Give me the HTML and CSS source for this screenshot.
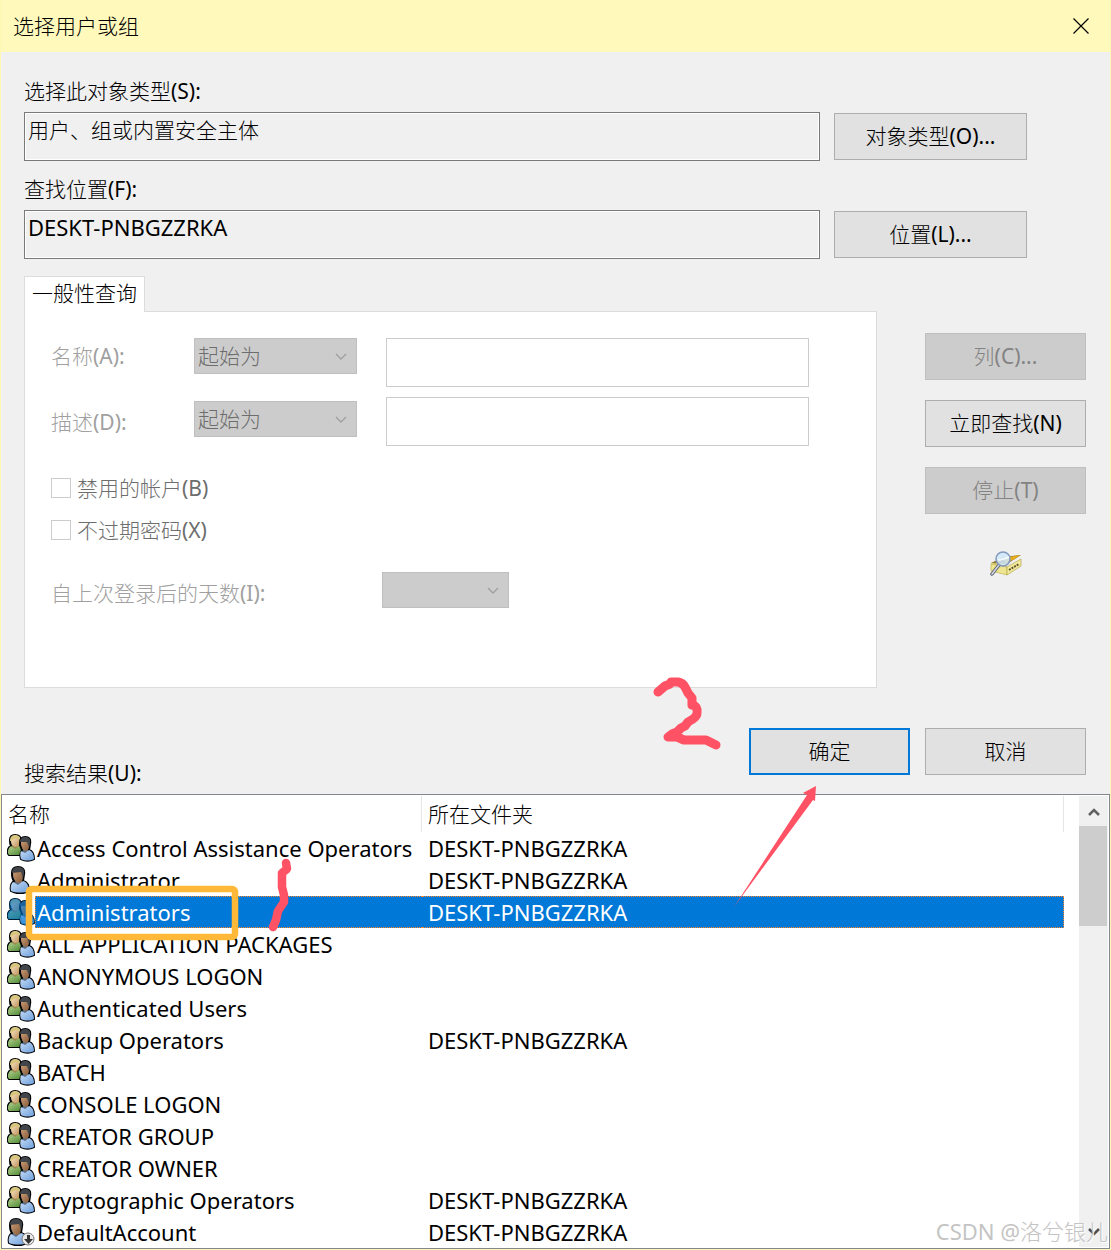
FILE: index.html
```html
<!DOCTYPE html>
<html lang="zh-CN">
<head>
<meta charset="utf-8">
<title>选择用户或组</title>
<link rel="stylesheet" href="styles.css">
</head>
<body>
<svg class="defs" aria-hidden="true">
  <defs>
    <linearGradient id="skin" x1="0" x2="1" y1="0" y2="1"><stop offset="0" stop-color="#c79a70"/><stop offset="1" stop-color="#855a3c"/></linearGradient>
    <linearGradient id="fair" x1="0" x2="1" y1="0" y2="1"><stop offset="0" stop-color="#fdeccb"/><stop offset="1" stop-color="#b98a55"/></linearGradient>
    <linearGradient id="blue" x1="0" x2="1" y1="0" y2="1"><stop offset="0" stop-color="#c6dcf6"/><stop offset="1" stop-color="#6d9fdc"/></linearGradient>
    <linearGradient id="green" x1="0" x2="1" y1="0" y2="1"><stop offset="0" stop-color="#b4d58d"/><stop offset="1" stop-color="#4e8434"/></linearGradient>
    <symbol id="users" viewBox="0 0 28 28">
      <path d="M3 6C3 2 5 1 8 1c4 0 6 2 6 6l-1 4 2 3v7H2c-2-2-2-7 2-9-1-2-1-4-1-6z" fill="#9b8b50" stroke="#000" stroke-width="2"/>
      <path d="M4 12l4 3 4-3 3 3v6H2c-2-2-1-7 2-9z" fill="url(#green)"/>
      <path d="M4 6c0-3 2-4 5-4 3 0 4 2 4 5 0 4-2 6-4 6-3 0-5-3-5-7z" fill="url(#fair)"/>
      <path d="M3 7c0-4 2-6 5-6s6 2 5 4c-4-1-7-1-8 2z" fill="#d8c680"/>
      <path d="M13 9c0-4 2-6 5-6 4 0 6 2 5 7l-1 6c3 1 5 4 5 9-4 2-9 2-13 0-1-3-1-6 1-9-1-2-2-4-2-7z" fill="#5b6e88" stroke="#000" stroke-width="2"/>
      <path d="M14 17l4 2 4-3c3 1 5 4 5 9-4 2-9 2-13 0-1-3-1-6 0-8z" fill="url(#blue)"/>
      <path d="M14 8c2-1 5-1 8 0 1 5-1 9-3 9-3 0-5-4-5-9z" fill="url(#skin)"/>
      <path d="M13 8c0-3 2-5 5-5 4 0 6 2 5 7l-1 3-2-5z" fill="#414449"/>
    </symbol>
    <symbol id="users-selected" viewBox="0 0 28 28">
      <use href="#users" width="28" height="28"/>
      <g fill="#0078d7" fill-opacity=".6" stroke="#0078d7" stroke-opacity=".25" stroke-width="2">
        <path d="M3 6C3 2 5 1 8 1c4 0 6 2 6 6 1-3 2-4 4-4 4 0 6 2 5 7l-1 6c3 1 5 4 5 9-4 2-9 2-13 0v-4H2c-2-2-2-7 2-9-1-2-1-4-1-6z"/>
      </g>
    </symbol>
    <symbol id="user" viewBox="0 0 28 28">
      <path d="M5 7c0-5 3-6 6-6 4 0 7 2 6 7l-1 7c4 1 6 5 6 10-5 3-13 3-18 0-1-5 0-8 3-10-2-2-2-5-2-8z" fill="#5b6e88" stroke="#000" stroke-width="2"/>
      <path d="M6 16l5 3 5-4c4 1 6 5 6 10-5 2-13 2-18 0-1-4 0-7 2-9z" fill="url(#blue)"/>
      <path d="M6 6c3-1 6-1 9 0 2 6 0 11-3 11-4 0-6-5-6-11z" fill="url(#skin)"/>
      <path d="M5 7c0-5 3-6 6-6 4 0 7 2 6 7l-1 4-2-6z" fill="#414449"/>
    </symbol>
    <symbol id="user-off" viewBox="0 0 28 28">
      <use href="#user" x="-2" width="28" height="28"/>
      <circle cx="21" cy="21" r="6" fill="#e8e8e8" stroke="#777"/>
      <path d="M20 17h3v4h3l-4.500 5-4.500-5h3z" fill="#333"/>
    </symbol>
    <symbol id="chevron" viewBox="0 0 12 7"><path d="M1 1l5 5 5-5" fill="none" stroke="currentColor" stroke-width="1.400"/></symbol>
  </defs>
</svg>

<main class="dialog">
  <header class="titlebar">
    <h1>选择用户或组</h1>
    <button class="close" type="button" aria-label="关闭">
      <svg width="16" height="16" viewBox="0 0 16 16"><path d="M.5.5l15 15M15.500.5l-15 15" stroke="#000" stroke-width="1.200"/></svg>
    </button>
  </header>

  <form class="content">
    <div class="field">
      <label for="types">选择此对象类型(S):</label>
      <div class="field-row">
        <input id="types" class="readout" readonly value="用户、组或内置安全主体">
        <button class="btn wide" type="button">对象类型(O)...</button>
      </div>
    </div>
    <div class="field">
      <label for="place">查找位置(F):</label>
      <div class="field-row">
        <input id="place" class="readout latin" readonly value="DESKT-PNBGZZRKA">
        <button class="btn wide" type="button">位置(L)...</button>
      </div>
    </div>

    <div class="query">
      <section class="tabs">
        <button class="tab" type="button">一般性查询</button>
        <div class="panel">
          <div class="criteria first">
            <label for="name">名称(A):</label>
            <span class="combo">
              <select disabled aria-label="名称条件"><option>起始为</option></select>
              <svg><use href="#chevron"/></svg>
            </span>
            <input id="name" disabled>
          </div>
          <div class="criteria second">
            <label for="desc">描述(D):</label>
            <span class="combo">
              <select disabled aria-label="描述条件"><option>起始为</option></select>
              <svg><use href="#chevron"/></svg>
            </span>
            <input id="desc" disabled>
          </div>
          <div class="checks">
            <label><input type="checkbox" disabled>禁用的帐户(B)</label>
            <label><input type="checkbox" disabled>不过期密码(X)</label>
          </div>
          <div class="days">
            <label for="days">自上次登录后的天数(I):</label>
            <span class="combo small">
              <select id="days" disabled><option></option></select>
              <svg><use href="#chevron"/></svg>
            </span>
          </div>
        </div>
      </section>
      <div class="actions">
        <button class="btn" type="button" disabled>列(C)...</button>
        <button class="btn" type="button">立即查找(N)</button>
        <button class="btn" type="button" disabled>停止(T)</button>
        <svg class="search-icon" viewBox="0 0 32 26">
          <path d="M1 12l13-6 17-2-14 8v10L1 19z" fill="#e6dc83"/>
          <path d="M1 12l13-6 17-2-14 9z" fill="#8e7430"/>
          <path d="M14 7l16-3-5 4-10 4z" fill="#e8ad1c"/>
          <path d="M1 13l16 3v8L1 20z" fill="#efe58e" stroke="#b8ab50" stroke-width=".6"/>
          <path d="M17 16l14-8v7l-14 9z" fill="#f3eb9c" stroke="#a89838" stroke-width=".6"/>
          <path d="M19 19l10-6" stroke="#5c5228" stroke-width="2" stroke-dasharray="2 1"/>
          <path d="M9 14l-7 9" stroke="#5d6470" stroke-width="3.500" stroke-linecap="round"/>
          <path d="M9 14l-7 9" stroke="#d5dae2" stroke-width="1.500" stroke-linecap="round"/>
          <circle cx="13" cy="8" r="7" fill="#cfe9fb" fill-opacity=".85" stroke="#8498bc" stroke-width="1.500"/>
          <path d="M8 9c4 0 7-2 11-3" stroke="#f2f8fd" stroke-width="2" fill="none"/>
        </svg>
      </div>
    </div>

    <div class="confirm">
      <h2 id="results">搜索结果(U):</h2>
      <button class="btn default" type="submit">确定</button>
      <button class="btn" type="button">取消</button>
    </div>
  </form>

  <div class="list">
    <table aria-labelledby="results">
      <thead><tr><th class="name">名称</th><th>所在文件夹</th></tr></thead>
      <tbody>
        <tr><td><div><svg><use href="#users"/></svg><span>Access Control Assistance Operators</span></div></td><td>DESKT-PNBGZZRKA</td></tr>
        <tr><td><div><svg><use href="#user"/></svg><span>Administrator</span></div></td><td>DESKT-PNBGZZRKA</td></tr>
        <tr class="selected"><td><div><svg><use href="#users-selected"/></svg><span>Administrators</span></div></td><td>DESKT-PNBGZZRKA</td></tr>
        <tr><td><div><svg><use href="#users"/></svg><span>ALL APPLICATION PACKAGES</span></div></td><td></td></tr>
        <tr><td><div><svg><use href="#users"/></svg><span>ANONYMOUS LOGON</span></div></td><td></td></tr>
        <tr><td><div><svg><use href="#users"/></svg><span>Authenticated Users</span></div></td><td></td></tr>
        <tr><td><div><svg><use href="#users"/></svg><span>Backup Operators</span></div></td><td>DESKT-PNBGZZRKA</td></tr>
        <tr><td><div><svg><use href="#users"/></svg><span>BATCH</span></div></td><td></td></tr>
        <tr><td><div><svg><use href="#users"/></svg><span>CONSOLE LOGON</span></div></td><td></td></tr>
        <tr><td><div><svg><use href="#users"/></svg><span>CREATOR GROUP</span></div></td><td></td></tr>
        <tr><td><div><svg><use href="#users"/></svg><span>CREATOR OWNER</span></div></td><td></td></tr>
        <tr><td><div><svg><use href="#users"/></svg><span>Cryptographic Operators</span></div></td><td>DESKT-PNBGZZRKA</td></tr>
        <tr><td><div><svg><use href="#user-off"/></svg><span>DefaultAccount</span></div></td><td>DESKT-PNBGZZRKA</td></tr>
      </tbody>
    </table>
    <div class="scrollbar">
      <button type="button" aria-label="向上滚动"><svg viewBox="0 0 12 9"><path d="M1 8l5-5 5 5" fill="none" stroke="#606060" stroke-width="2.500"/></svg></button>
      <div class="thumb"></div>
      <button type="button" aria-label="向下滚动"><svg viewBox="0 0 12 9"><path d="M1 1l5 5 5-5" fill="none" stroke="#505050" stroke-width="2.500"/></svg></button>
    </div>
  </div>

  <svg class="marks" width="830" height="950" viewBox="0 0 830 950" aria-hidden="true">
    <rect x="29" y="889" width="206" height="48" rx="3" fill="none" stroke="#ffb837" stroke-width="6.500"/>
    <g fill="none" stroke="#ff5264" stroke-linecap="round" stroke-linejoin="round">
      <path d="M286 863l1 6-5 4v14l2 8v7l-6 9-2 9-3 7" stroke-width="8.500"/>
      <path d="M658 692l7-6 5-2 1-2h7q5 1 7 5l3 6 4 5v7q6 1 5 8 0 3-4 6l-5 3-3 4-4 2-4 4-5 2-4 3h9l7 3h22l6 3 4 2" stroke-width="9"/>
    </g>
    <path d="M816 786l-13 7 4 2-73 112 79-107 2 1z" fill="#ff5264"/>
  </svg>
  <p class="watermark">CSDN @洛兮银儿</p>
</main>
</body>
</html>
```
FILE: styles.css
```css
* {
  box-sizing: border-box;
}

body {
  margin: 0;
  background: #f0f0f0;
  color: #000;
}

body,
button,
input,
select {
  font-family: "Noto Sans", "Noto Sans CJK SC Light", "Noto Sans CJK SC", sans-serif;
  font-size: 21px;
  font-weight: 400;
  line-height: 30px;
}

h1,
h2,
p {
  margin: 0;
  font-size: 21px;
  font-weight: 400;
}

button {
  padding: 0;
  color: #000;
}

.defs {
  position: absolute;
  width: 0;
  height: 0;
}

.dialog {
  position: relative;
  border: 1px solid #fff8b4;
  border-top: 0;
  overflow: hidden;
}

.titlebar {
  display: flex;
  align-items: center;
  justify-content: space-between;
  height: 52px;
  padding: 0 21px 0 12px;
  background: #fffabc;
}

.close {
  display: flex;
  border: 0;
  background: none;
}

.content {
  padding: 24px 24px 0 23px;
}

.field {
  margin-bottom: 13px;
}

.field label {
  display: block;
  height: 36px;
}

.field-row {
  display: flex;
  align-items: center;
  gap: 14px;
  padding-right: 59px;
}

.readout {
  flex: 1;
  min-width: 0;
  height: 49px;
  padding: 0 3px 16px;
  border: 1px solid #7a7a7a;
  border-radius: 0;
  background: #f0f0f0;
  box-shadow: inset 0 0 0 1px #fff;
  outline: 0;
}

.readout.latin {
  font-size: 22px;
}

.btn {
  width: 161px;
  height: 47px;
  padding-bottom: 2px;
  border: 1px solid #adadad;
  background: #e1e1e1;
}

.btn.wide {
  width: 193px;
}

.btn:disabled {
  border-color: #bfbfbf;
  background: #ccc;
  color: #838383;
}

.btn.default {
  border: 2px solid #0078d7;
}

.query {
  display: flex;
  gap: 48px;
  margin-top: 17px;
}

.tabs {
  flex: 1;
}

.tab {
  display: block;
  position: relative;
  height: 36px;
  padding: 0 7px 4px;
  border: 1px solid #dcdcdc;
  border-bottom: 0;
  background: #fff;
}

.panel {
  height: 377px;
  margin-top: -1px;
  padding: 26px 67px 0 26px;
  border: 1px solid #dcdcdc;
  background: #fff;
  color: #a0a0a0;
}

.criteria {
  display: grid;
  grid-template-columns: 143px 163px 1fr;
  align-items: center;
  margin-bottom: 10px;
}

.criteria.first {
  align-items: start;
}

.first label {
  line-height: 36px;
}

.second .combo {
  padding-bottom: 5px;
}

.criteria input {
  min-width: 0;
  height: 49px;
  margin-left: 29px;
  border: 1px solid #ccc;
  border-radius: 0;
  background: #fff;
}

.combo {
  display: grid;
  grid-template-columns: 1fr 30px;
  align-items: center;
}

.combo select {
  grid-area: 1 / 1 / 2 / 3;
  width: 100%;
  height: 36px;
  padding: 0 3px;
  border: 1px solid #bfbfbf;
  border-radius: 0;
  background: #ccc;
  color: #6d6d6d;
  opacity: 1;
  appearance: none;
}

.combo svg {
  grid-area: 1 / 2;
  width: 12px;
  height: 7px;
  margin-left: 8px;
  color: #a0a0a0;
}

.checks {
  display: grid;
  gap: 12px;
  margin-top: 27px;
  color: #6d6d6d;
}

.checks label {
  display: flex;
  align-items: center;
  gap: 6px;
}

.checks input {
  width: 20px;
  height: 20px;
  margin: 0;
  border: 1px solid #ccc;
  background: #fff;
  appearance: none;
}

.days {
  display: grid;
  grid-template-columns: 331px 127px;
  align-items: end;
  margin-top: 27px;
}

.actions {
  display: flex;
  flex-direction: column;
  align-items: center;
  gap: 20px;
  padding-top: 57px;
}

.search-icon {
  width: 32px;
  height: 26px;
  margin-top: 17px;
}

.confirm {
  display: flex;
  align-items: start;
  gap: 15px;
  height: 66px;
  margin-top: 40px;
}

.confirm h2 {
  flex: 1;
  align-self: end;
  padding-bottom: 6px;
}

.list {
  display: flex;
  gap: 15px;
  padding: 1px 1px 0 0;
  border: 1px solid #828790;
  background: #fff;
}

table {
  flex: 1;
  border-collapse: separate;
  border-spacing: 0;
  table-layout: fixed;
}

th {
  height: 36px;
  padding: 0 6px;
  border-right: 1px solid #e5e5e5;
  font-weight: 400;
  text-align: left;
}

th.name {
  width: 420px;
}

td {
  height: 32px;
  padding: 0 6px;
  font-size: 22px;
  white-space: nowrap;
}

td:first-child {
  padding: 0 0 0 5px;
}

td div {
  display: flex;
  align-items: center;
}

td svg {
  width: 28px;
  height: 28px;
}

td span {
  flex: 1;
  padding-left: 2px;
  line-height: 32px;
}

.selected {
  color: #fff;
}

.selected span,
.selected td + td {
  background: #0078d7;
}

.selected span {
  padding-left: 1px;
  border-left: 1px dotted #ff8728;
}

.selected span,
.selected td + td {
  line-height: 30px;
  border-top: 1px dotted #ff8728;
  border-bottom: 1px dotted #ff8728;
}

.selected td + td {
  border-right: 1px dotted #ff8728;
}

.scrollbar {
  display: flex;
  flex-direction: column;
  width: 29px;
  margin-bottom: 1px;
  background: #f0f0f0;
}

.scrollbar button {
  display: flex;
  align-items: center;
  justify-content: center;
  height: 30px;
  border: 0;
  background: none;
}

.scrollbar button:last-child {
  margin-top: auto;
}

.scrollbar svg {
  width: 12px;
  height: 9px;
}

.thumb {
  height: 100px;
  margin-right: 1px;
  background: #cdcdcd;
}

.marks {
  position: absolute;
  top: 0;
  left: -1px;
  pointer-events: none;
}

.watermark {
  position: absolute;
  right: 2px;
  bottom: 3px;
  color: #c4c4c4;
  font-size: 22px;
  text-shadow: 1px 1px 0 #fff;
}
```
